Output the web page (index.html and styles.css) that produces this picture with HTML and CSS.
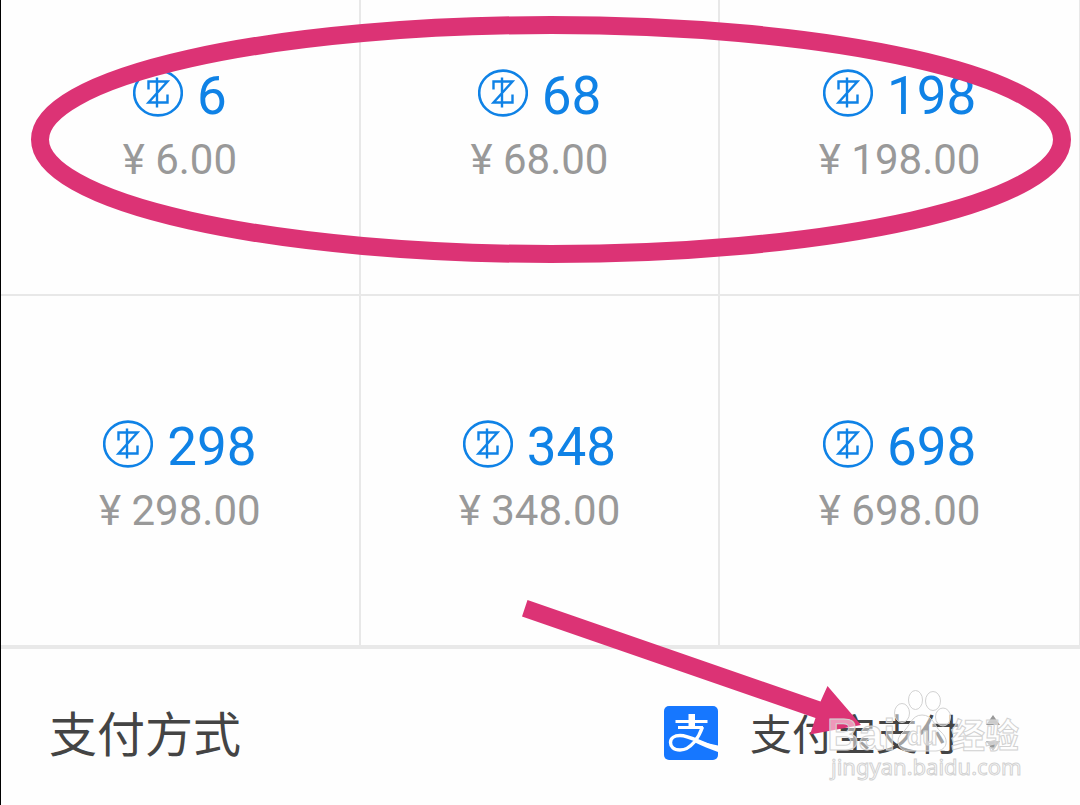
FILE: index.html
```html
<!DOCTYPE html>
<html lang="zh-CN">
<head>
<meta charset="utf-8">
<meta name="viewport" content="width=device-width, initial-scale=1">
<title>支付方式</title>
<link rel="stylesheet" href="styles.css">
</head>
<body>
<svg class="defs" aria-hidden="true">
  <symbol id="coin" viewBox="0 0 50 48">
    <ellipse cx="25" cy="24" rx="23.8" ry="22.4" fill="none" stroke="currentColor" stroke-width="2.6"/>
    <path d="M15.500 20.500V12.500H34.500L15.500 33.500H34.500V25.500M24 8.500V38.500" fill="none" stroke="currentColor" stroke-width="2.400"/>
  </symbol>
</svg>
<main class="page">
  <section class="amounts">
    <button class="amount" type="button"><span class="coins"><svg class="coin"><use href="#coin"/></svg>6</span><span class="price">¥ 6.00</span></button>
    <button class="amount" type="button"><span class="coins"><svg class="coin"><use href="#coin"/></svg>68</span><span class="price">¥ 68.00</span></button>
    <button class="amount" type="button"><span class="coins"><svg class="coin"><use href="#coin"/></svg>198</span><span class="price">¥ 198.00</span></button>
    <button class="amount" type="button"><span class="coins"><svg class="coin"><use href="#coin"/></svg>298</span><span class="price">¥ 298.00</span></button>
    <button class="amount" type="button"><span class="coins"><svg class="coin"><use href="#coin"/></svg>348</span><span class="price">¥ 348.00</span></button>
    <button class="amount" type="button"><span class="coins"><svg class="coin"><use href="#coin"/></svg>698</span><span class="price">¥ 698.00</span></button>
  </section>
  <section class="payment">
    <label class="label" for="method">支付方式</label>
    <div class="method">
      <svg class="alipay" viewBox="0 0 54 54" aria-hidden="true">
        <rect width="54" height="54" rx="5" fill="#1677ff"/>
        <path d="M11.500 15.500H43.500M14 21.500H39" fill="none" stroke="#fff" stroke-width="2.800"/>
        <path d="M24.500 8H31V22H24.500Z" fill="#fff"/>
        <path d="M38.500 21C35 31 27 44 16 44C9.500 44 6.500 40.500 6.500 36.500C6.500 32 10.500 29.500 16 29.500C26 29.500 37 37.500 54 42.500" fill="none" stroke="#fff" stroke-width="3.400"/>
        <path d="M33 33.500C39 36 46 38 54 39.500V46C46 43 38 40 31 36.500Z" fill="#fff"/>
      </svg>
      <select class="select" id="method"><option>支付宝支付</option></select>
      <svg class="sorter" viewBox="0 0 16 36" aria-hidden="true"><path d="M8 0L15 10H1ZM8 36L15 26H1Z" fill="#999"/></svg>
    </div>
  </section>
  <svg class="overlay" viewBox="0 0 1080 805" aria-hidden="true">
    <g fill="#dc3375">
      <ellipse cx="551" cy="139.500" rx="511" ry="114.500" fill="none" stroke="#dc3375" stroke-width="18"/>
      <path d="M527.500 600L820.500 701.500L827.500 686L861 725L810 734.500L815.500 718L522 616.500Z"/>
    </g>
    <g class="mark">
      <ellipse cx="902" cy="713" rx="7.500" ry="9.500"/>
      <ellipse cx="915.500" cy="700" rx="7" ry="9.500"/>
      <ellipse cx="933" cy="701" rx="7.500" ry="9.500"/>
      <ellipse cx="943" cy="717" rx="7.500" ry="9"/>
      <path d="M922 715C911 715 910 727 902 733C894 741 899 752 909 751H936C948 750 949 739 941 732C934 726 933 715 922 715Z"/>
      <text class="brand" x="827" y="750">Bai</text>
      <text class="inner" x="907" y="745">du</text>
      <text class="brand cjk" x="951" y="748">经验</text>
      <text class="site" x="831" y="775">jingyan.baidu.com</text>
    </g>
  </svg>
</main>
</body>
</html>
```
FILE: styles.css
```css
* { box-sizing: border-box; }

body {
  margin: 0;
  background: #fefefe;
  font-family: Roboto, "Noto Sans CJK SC", sans-serif;
}

.defs { display: block; width: 0; height: 0; }

.page {
  position: relative;
  min-height: 100vh;
  border-left: 1px solid #000;
  overflow: hidden;
}

.amounts {
  display: grid;
  grid-template-columns: repeat(3, 1fr);
  border-bottom: 4px solid #e9e9e9;
}

.amount {
  display: flex;
  flex-direction: column;
  align-items: center;
  padding: 65px 0 108px;
  border: 0;
  border-right: 2px solid #e8e8e8;
  border-bottom: 2px solid #e8e8e8;
  background: none;
  font-family: inherit;
}

.amount:nth-child(3n) { border-right-width: 1px; }

.amount:nth-child(n + 4) {
  padding: 120px 0 108px;
  border-bottom: 0;
}

.coins {
  display: flex;
  align-items: center;
  gap: 14px;
  color: #0f82e6;
  font-size: 53px;
  line-height: 62px;
}

.coin { width: 50px; height: 48px; margin-bottom: 6px; }

.price {
  margin-top: 7px;
  color: #999;
  font-size: 42px;
  line-height: 52px;
}

.payment {
  display: flex;
  justify-content: space-between;
  align-items: center;
  padding: 46px 79px 32px 48px;
  color: #444;
}

.label {
  padding-top: 6px;
  font-size: 48px;
  line-height: 70px;
}

.method { display: flex; align-items: center; }

.alipay { width: 54px; height: 54px; margin-right: 32px; }

.select {
  appearance: none;
  padding: 6px 0 0;
  border: 0;
  background: none;
  color: inherit;
  font-family: inherit;
  font-size: 42px;
  line-height: 64px;
}

.sorter { width: 16px; height: 36px; margin-left: 24px; }

.overlay {
  position: absolute;
  top: 0;
  left: -1px;
  width: 100vw;
  pointer-events: none;
}

.mark {
  fill: rgba(255, 255, 255, 0.5);
  stroke: #d2d2d2;
  stroke-width: 1;
}

.brand { font: bold 44px "Liberation Sans", sans-serif; }

.cjk { font: bold 34px "Noto Sans CJK SC", sans-serif; }

.inner { font: bold 25px "Liberation Sans", sans-serif; }

.site { font: 22px "Noto Sans", sans-serif; }
```
